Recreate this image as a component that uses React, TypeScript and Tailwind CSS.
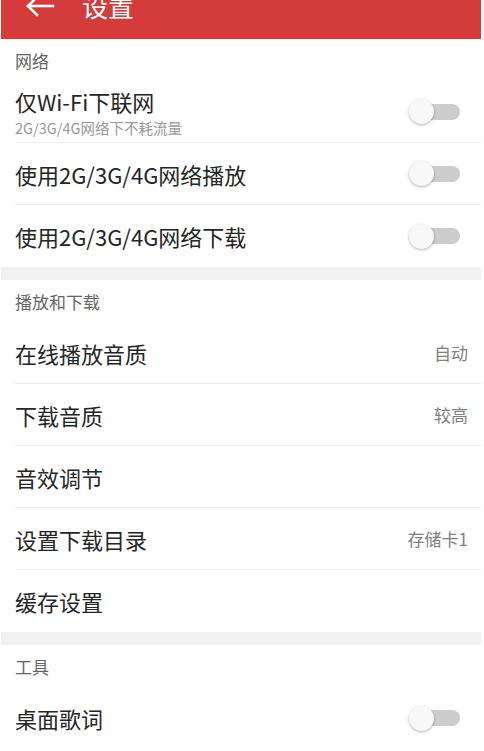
import React from "react";

const font = { fontFamily: '"Noto Sans CJK SC", "Noto Sans", sans-serif' };

function Toggle() {
  return (
    <div className="relative w-[51px] h-[26px] flex items-center shrink-0">
      <div className="absolute left-[2px] right-0 h-[16px] rounded-full bg-[#cdcdcd]" />
      <div className="absolute left-0 w-[25px] h-[25px] rounded-full bg-[#f8f8f8] shadow-[0_1px_3px_rgba(0,0,0,0.3)]" />
    </div>
  );
}

function SectionLabel({ text }: { text: string }) {
  return (
    <div className="h-[42px] flex items-center pl-[14px] pt-[1px] text-[17px] text-[#666]">
      {text}
    </div>
  );
}

function Row({
  title,
  sub,
  value,
  toggle,
  divider = true,
}: {
  title: string;
  sub?: string;
  value?: string;
  toggle?: boolean;
  divider?: boolean;
}) {
  return (
    <div className="pl-[14px]">
      <div
        className={
          "h-[62px] flex items-center justify-between " +
          (divider ? "border-b border-[#eeeeee]" : "")
        }
      >
        <div className="flex flex-col">
          <div className="text-[22px] leading-[32px] text-[#262626]">{title}</div>
          {sub && (
            <div className="text-[14.5px] leading-[21px] text-[#9a9a9a]">{sub}</div>
          )}
        </div>
        {toggle && (
          <div className="pr-[21px]">
            <Toggle />
          </div>
        )}
        {value && (
          <div className="pr-[13px] text-[17px] text-[#808080]">{value}</div>
        )}
      </div>
    </div>
  );
}

function Gap() {
  return <div className="h-[13px] bg-[#f1f1f1]" />;
}

export default function App() {
  return (
    <div className="w-[484px] h-[751px] overflow-hidden bg-white" style={font}>
      <div className="ml-[1px] w-[480px]">
        <div className="h-[39px] bg-[#d43b3a] overflow-hidden">
          <div className="h-[56px] -mt-[22px] flex items-center">
            <svg
              className="ml-[24px]"
              width="30"
              height="22"
              viewBox="0 0 30 22"
              fill="none"
              stroke="white"
              strokeWidth="2.6"
              strokeLinecap="square"
            >
              <path d="M3 11 H28" />
              <path d="M12 2 L3 11 L12 20" />
            </svg>
            <div className="ml-[27px] text-[26px] leading-[38px] text-white">设置</div>
          </div>
        </div>

        <SectionLabel text="网络" />
        <Row title="仅Wi-Fi下联网" sub="2G/3G/4G网络下不耗流量" toggle />
        <Row title="使用2G/3G/4G网络播放" toggle />
        <Row title="使用2G/3G/4G网络下载" toggle divider={false} />
        <Gap />

        <SectionLabel text="播放和下载" />
        <Row title="在线播放音质" value="自动" />
        <Row title="下载音质" value="较高" />
        <Row title="音效调节" />
        <Row title="设置下载目录" value="存储卡1" />
        <Row title="缓存设置" divider={false} />
        <Gap />

        <SectionLabel text="工具" />
        <Row title="桌面歌词" toggle divider={false} />
      </div>
    </div>
  );
}
